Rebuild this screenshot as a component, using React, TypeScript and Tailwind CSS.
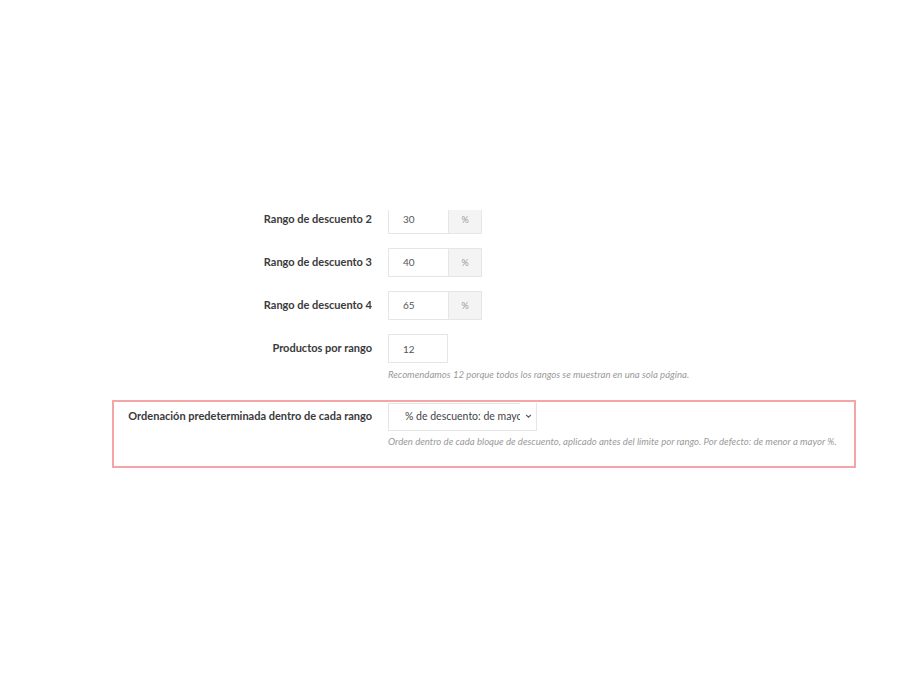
import { useState } from 'react'

type RangeRow = { label: string; value: string }

const ranges: RangeRow[] = [
  { label: 'Rango de descuento 2', value: '30' },
  { label: 'Rango de descuento 3', value: '40' },
  { label: 'Rango de descuento 4', value: '65' },
]

const font = { fontFamily: 'Lato, "Noto Sans", sans-serif' }

function Label({ children }: { children: string }) {
  return (
    <div className="w-[259px] shrink-0 pr-px text-right text-[11px] leading-[28px] font-bold text-[#3a3a3a]">
      {children}
    </div>
  )
}

function Help({ children }: { children: string }) {
  return <p className="mt-[5px] whitespace-nowrap text-[9.6px] leading-[13px] italic text-[#9a9a9a]">{children}</p>
}

function PercentField({ value }: { value: string }) {
  return (
    <div className="flex h-[29px] w-[94px] border border-[#e6e6e6]">
      <input
        defaultValue={value}
        className="w-[60px] border-r border-[#e6e6e6] bg-white pl-[14px] text-[10px] text-[#555] outline-none"
      />
      <span className="flex flex-1 items-center justify-center bg-[#f4f4f4] text-[9px] text-[#999]">%</span>
    </div>
  )
}

export default function App() {
  const [order, setOrder] = useState('desc')

  return (
    <div className="h-[693px] w-full overflow-hidden bg-white pt-[210px]" style={font}>
      {/* settings list, scrolled so the first rows sit above the fold */}
      <div className="overflow-hidden">
        <div className="-mt-[5px] ml-[112px] w-[744px]">
          {ranges.map((r) => (
            <div key={r.label} className="mb-[14px] flex gap-[15px] px-[2px]">
              <Label>{r.label}</Label>
              <PercentField value={r.value} />
            </div>
          ))}

          <div className="flex gap-[15px] px-[2px]">
            <Label>Productos por rango</Label>
            <div>
              <input
                defaultValue="12"
                className="h-[29px] w-[60px] border border-[#e6e6e6] bg-white pl-[14px] text-[10px] text-[#555] outline-none"
              />
              <Help>Recomendamos 12 porque todos los rangos se muestran en una sola página.</Help>
            </div>
          </div>

          <div className="mt-[19px] flex gap-[15px] border-2 border-[#f4a6a6] pb-[18px]">
            <Label>Ordenación predeterminada dentro de cada rango</Label>
            <div>
              <div className="relative h-[28px] w-[149px]">
                <select
                  value={order}
                  onChange={(e) => setOrder(e.target.value)}
                  className="h-full w-full appearance-none overflow-hidden border border-[#e6e6e6] bg-white pl-[16px] pr-[4px] text-[10.5px] text-[#444] outline-none"
                >
                  <option value="desc">% de descuento: de mayor a menor</option>
                  <option value="asc">% de descuento: de menor a mayor</option>
                </select>
                <span className="pointer-events-none absolute right-px top-px bottom-px w-[16px] bg-white" />
                <svg
                  className="pointer-events-none absolute right-[5px] top-[12px] h-[4px] w-[7px] text-[#555]"
                  viewBox="0 0 8 5"
                  fill="none"
                  stroke="currentColor"
                  strokeWidth="1.3"
                >
                  <path d="M1 1l3 3 3-3" />
                </svg>
              </div>
              <Help>
                Orden dentro de cada bloque de descuento, aplicado antes del límite por rango. Por defecto: de menor a mayor %.
              </Help>
            </div>
          </div>
        </div>
      </div>
    </div>
  )
}
